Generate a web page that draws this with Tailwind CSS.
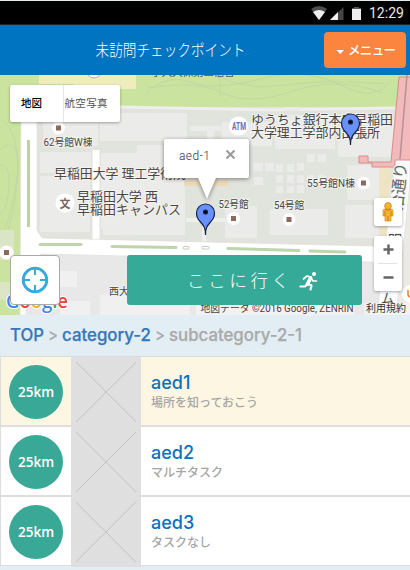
<!DOCTYPE html>
<html lang="ja">
<head>
<meta charset="utf-8">
<title>未訪問チェックポイント</title>
<script src="https://cdn.jsdelivr.net/npm/@tailwindcss/browser@4"></script>
</head>
<body class="w-[410px] h-[570px] overflow-hidden bg-[#e3eef4] font-['Liberation_Sans','Noto_Sans_CJK_JP',sans-serif]">
<div class="h-px bg-[#e3ece8]"></div>
<div class="h-6 bg-black border-b border-[#222] flex items-center justify-end pr-[6px]">
  <svg class="w-[58px] h-6" viewBox="311 1 58 24">
    <path d="M311 9q8-6 16 0l-8 11z" fill="#4d4d4d"/><path d="M313 12q6-4 12 0l-6 8z" fill="#eee"/>
    <path d="M343.500 7v13h-13.500z" fill="#444"/><path d="M338 12v8h-8z" fill="#f2f2f2"/>
    <path d="M352 8h2v-1h5v1h2v12h-9z" fill="#eee"/><path d="M352 8h2v-1h5v1h2v1h-9z" fill="#555"/>
  </svg>
  <span class="font-['Roboto'] text-[14px] leading-6 text-[#e8e8e8] w-[35px] whitespace-nowrap">12:29</span>
</div>
<header class="h-[50px] bg-[#0174c1] grid grid-cols-[95px_155px_1fr] items-center">
  <span></span>
  <svg class="w-[155px] h-[30px]" viewBox="95 35 155 30"><text x="95.500" y="55.500" textLength="150" lengthAdjust="spacingAndGlyphs" font-size="16" font-weight="300" fill="#fff" font-family="Noto Sans CJK JP, sans-serif">未訪問チェックポイント</text></svg>
  <button class="justify-self-end mr-1 w-[82px] h-9 rounded-[4px] bg-[#fb843e] text-white">
    <svg class="w-[82px] h-9" viewBox="324 32 82 36"><path d="M336.500 50h7.500l-3.750 4z" fill="#fff"/><text x="348" y="55" textLength="48" font-size="12.500" font-weight="500" fill="#fff" font-family="Noto Sans CJK JP, sans-serif">メニュー</text></svg>
  </button>
</header>
<main>
<section class="h-60 relative overflow-hidden">
  <svg class="block w-[410px] h-60" viewBox="0 75 410 240" font-family="Roboto, Noto Sans CJK JP, sans-serif">
    <rect y="75" width="410" height="240" fill="#e1e3dd"/>
    <path d="M0 75h410v32H136l-100-2-15 5v205H0z" fill="#cae49f"/>
    <g fill="none" stroke="#c0d2a6" stroke-width=".8">
      <path d="M145 95q20-22 45-13t70-3 80 6 50-4M215 75q30 16 70 10t100-1M148 88q50-8 75 5t70-2 90 2M220 75v22"/>
      <path d="M0 150q14-12 17 5t-5 50-12 30M0 165q10-2 9 20t-9 30M3 120q16 16 15 50T5 240"/>
    </g>
    <path d="M39 75h97v14h-17v-2h-45v-3H39z" fill="#f0edbd"/>
    <circle cx="94" cy="71" r="7" fill="#fff" stroke="#aaa"/>
    <text x="151" y="75.500" font-size="11" fill="#555" textLength="84">学大久保第三宿舎</text>
    <path d="M120 107l150 3 125-2" fill="none" stroke="#eeeeec" stroke-width="3"/>
    <g fill="#ebebea">
      <path d="M43 116h55v30H43zM100 113h87v28h-87zM137 145h50v35h-50zM40 152h51v21H40zM40 176h50v56H40zM101 153h60v76h-60zM103 180h82v55h-82z"/>
      <path d="M190 126h37v5h-13v25h-7v-25h-17zM222 122h50v24h-50zM275 115h60v34h-60zM338 119h56v38h-56zM347 165h43v35h-43zM285 107h16v4h-16z"/>
      <path d="M225 206h32v32h-32zM270 209h26v26h-26zM296 209h32v26h-32zM345 205h34v33h-34z"/>
      <path d="M254 163h9v8h-9zM265 163h9v8h-9zM254 177h9v8h-9zM276 164h7v8h-7zM287 164h7v8h-7zM297 163h7v8h-7zM307 154h8v8h-8zM318 154h8v8h-8zM276 175h7v8h-7zM287 175h7v8h-7zM297 175h7v8h-7zM307 175h8v8h-8zM318 175h8v8h-8zM276 186h7v7h-7zM287 186h7v7h-7zM297 185h7v8h-7z"/>
    </g>
    <path d="M184 180h44v6h-44z" fill="#ecd9ba"/>
    <path d="M186 220h39M204 225v18" stroke="#efefed" stroke-width="4"/>
    <path d="M40 252h370v63H20v-55z" fill="#e8e8e8"/>
    <path d="M55 271h22v16H55zM100 295h90v20h-90zM60 301h30v14H60z" fill="#f0f0f0"/>
    <path d="M96 150v90" stroke="#fff" stroke-width="7"/>
    <path d="M21 108h16v122l5 8 330 8 8 0v20l-8-4-330-8-12 5-4 10v46H20z" fill="#fff" stroke="#e5dddd" stroke-width=".7"/>
    <path d="M379 166h12l-5 79h-6z" fill="#eee4c3"/>
    <path d="M28.500 140v87" stroke="#bdd0a8" stroke-width="3"/>
    <path d="M40 244.500h41M112 246.500l64 1M228 248.500l71 2M310 251l35 1" stroke="#bfd4ac" stroke-width="3" stroke-linecap="round"/>
    <rect x="183" y="246.500" width="6" height="2.500" rx="1" fill="#fff" stroke="#cfc4bd"/><rect x="202" y="246.500" width="7" height="2.500" rx="1" fill="#fff" stroke="#cfc4bd"/>
    <path d="M395 159h15v25l-14 131h-19z" fill="#fdfdfd" stroke="#ddd5d0" stroke-width=".6"/>
    <path d="M410 184v131h-14z" fill="#eceae4"/>
    <path d="M399 77h12v83h-16v7h-23v-4h-13v-7h9v6h23z" fill="#f2babb" stroke="#dc8b8d"/>
    <path d="M407 75l-7 84" stroke="#b79295" stroke-width="1.500"/>
    <path d="M0 230h14v30H0zM0 282h12v18H0z" fill="#d9e5c5"/>

    <g fill="#fff">
      <circle cx="58.500" cy="128" r="6.500"/><circle cx="65" cy="203" r="9.500"/><circle cx="6.500" cy="252.500" r="7"/><circle cx="233.500" cy="218.500" r="6.500"/><circle cx="289" cy="219.500" r="6.500"/><circle cx="363.500" cy="183" r="6.500"/><circle cx="238.500" cy="126" r="9.500"/><circle cx="411" cy="294" r="9"/>
    </g>
    <path d="M56 125.500h5v5h-5zM4 250h5v5h-5zM231 216h5v5h-5zM286.500 217h5v5h-5zM361 180.500h5v5h-5z" fill="#8b6a5d"/>
    <path d="M408 290v4q0 3 4 3" stroke="#ee8d37" stroke-width="1.700" fill="none"/>
    <text x="59.500" y="207.500" font-size="11" font-weight="700" fill="#79645d">文</text>
    <text x="232" y="130" font-size="10.500" font-weight="700" textLength="14" lengthAdjust="spacingAndGlyphs" fill="#696bc0">ATM</text>
    <g fill="#4a4745" stroke="#f3f3f0" stroke-width="2" paint-order="stroke" stroke-linejoin="round">
      <text x="43.500" y="145.500" font-size="10" textLength="49" lengthAdjust="spacingAndGlyphs">62号館W棟</text>
      <text x="54" y="177.500" font-size="13" textLength="132" lengthAdjust="spacingAndGlyphs">早稲田大学 理工学術院</text>
      <text x="77" y="200.500" font-size="13" textLength="81" lengthAdjust="spacingAndGlyphs">早稲田大学 西</text>
      <text x="77" y="213.500" font-size="13" textLength="104" lengthAdjust="spacingAndGlyphs">早稲田キャンパス</text>
      <text x="251" y="124" font-size="13" textLength="142" lengthAdjust="spacingAndGlyphs">ゆうちょ銀行本店早稲田</text>
      <text x="251" y="137" font-size="13" textLength="129" lengthAdjust="spacingAndGlyphs">大学理工学部内出張所</text>
      <text x="307" y="187" font-size="10" textLength="48" lengthAdjust="spacingAndGlyphs">55号館N棟</text>
      <text x="218.500" y="208" font-size="10" textLength="30" lengthAdjust="spacingAndGlyphs">52号館</text>
      <text x="274" y="209" font-size="10" textLength="30" lengthAdjust="spacingAndGlyphs">54号館</text>
      <text x="109" y="294.500" font-size="10">西大久保</text>
      <text transform="translate(402 211) rotate(-84)" font-size="16" fill="#666">治通り</text>
      <text x="388" y="245" font-size="14">明</text>
      <text x="381" y="303" font-size="13">ム</text>
    </g>
    <text x="23" y="320" font-size="8" font-weight="700" fill="#333" textLength="107">EI ECONINTERNATIONAL</text>
    <text x="6" y="308" font-family="Open Sans, sans-serif" font-size="20" font-weight="600" textLength="62" lengthAdjust="spacingAndGlyphs" stroke="#fff" stroke-width="2" paint-order="stroke"><tspan fill="#4484ef">G</tspan><tspan fill="#e84438">o</tspan><tspan fill="#f6b51c">o</tspan><tspan fill="#4484ef">g</tspan><tspan fill="#3aa65b">l</tspan><tspan fill="#e84438">e</tspan></text>
    <rect x="196" y="303" width="158" height="12" fill="#f4f4f4" opacity=".8"/><rect x="364" y="303" width="46" height="12" fill="#f4f4f4" opacity=".75"/>
    <text x="200.500" y="311.500" font-size="10" fill="#444" textLength="153" lengthAdjust="spacingAndGlyphs">地図データ ©2016 Google, ZENRIN</text>
    <text x="366" y="312" font-size="10" fill="#333" textLength="40" lengthAdjust="spacingAndGlyphs">利用規約</text>

    <g fill="#6991fd" stroke="#172447" stroke-width="1.200">
      <path d="M205.500 235c0-7-1.500-9-5-13-3-3-4-6-4-9a9 9 0 0 1 18 0c0 3-1 6-4 9-3.500 4-5 6-5 13z"/><circle cx="205.500" cy="212" r="2" fill="#000"/>
      <path d="M350.500 145c0-7-1.500-9-5-13-3-3-4-6-4-9a9 9 0 0 1 18 0c0 3-1 6-4 9-3.500 4-5 6-5 13z"/><circle cx="350.500" cy="122" r="2" fill="#000"/>
    </g>
    <g style="filter:drop-shadow(0 1px 2px #0007)">
      <path d="M166 139h81q2 0 2 2v35q0 2-2 2h-31l-9 21-9-21h-32q-2 0-2-2v-35q0-2 2-2z" fill="#fff"/>
    </g>
    <text x="179" y="160" font-size="12" font-weight="300" fill="#333" textLength="31">aed-1</text>
    <path d="M226.500 150.500l8 8m0-8l-8 8" stroke="#999" stroke-width="2"/>
  </svg>
  <div class="absolute left-[10px] top-[10px] w-[110px] h-[37px] bg-white rounded-[2px] shadow-[0_1px_3px_#0005] flex">
    <svg class="w-[110px] h-[37px]" viewBox="10 85 110 37" font-family="Noto Sans CJK JP, sans-serif"><path d="M63.500 85v37" stroke="#e6e6e6"/><text x="21" y="106.500" font-size="10.500" font-weight="500" fill="#000">地図</text><text x="64.500" y="106.500" font-size="10.500" fill="#555" textLength="43">航空写真</text></svg>
  </div>
  <div class="absolute left-[374px] top-[123px] w-7 h-7 bg-white rounded-[2px] shadow-[0_1px_3px_#0005] grid place-items-center">
    <svg class="w-3 h-5" viewBox="0 0 12 20"><path d="M3 7h6q2 0 2 2v5H9v5H3v-5H1V9q0-2 2-2z" fill="#f7b32b" stroke="#d28e20" stroke-width=".7"/><circle cx="6" cy="4" r="3.400" fill="#f7b32b" stroke="#c98222" stroke-width=".7"/><path d="M6 14v5M3 7q3 3 6 0M3 9v5M9 9v5" stroke="#bd7719" fill="none" stroke-width=".8"/></svg>
  </div>
  <div class="absolute left-[374px] top-[161px] w-7 h-[55px] bg-white rounded-[2px] shadow-[0_1px_3px_#0005]">
    <svg class="w-7 h-[55px]" viewBox="0 0 28 55"><path d="M9.500 13.500h10M14.500 8.500v10M9.500 41.500h10" stroke="#666" stroke-width="2.500"/><path d="M4 27.500h19" stroke="#e3e3e3"/></svg>
  </div>
  <button class="absolute left-[10px] top-[180px] w-[50px] h-[50px] bg-white border border-[#aaa] rounded-[4px] grid place-items-center">
    <svg class="w-7 h-7" viewBox="0 0 28 28" fill="none" stroke="#35a9dc"><circle cx="14" cy="14" r="11.800" stroke-width="2.800"/><path d="M14 3v6M14 19v6M3 14h6M19 14h6" stroke-width="2"/></svg>
  </button>
  <button class="absolute left-[127px] top-[180px] w-[235px] h-[50px] bg-[#35aa99] rounded-[3px]">
    <svg class="w-[235px] h-[50px]" viewBox="127 255 235 50"><text x="187" y="286.500" font-family="Noto Sans CJK JP, sans-serif" font-size="17.500" font-weight="300" fill="#fff" textLength="102">ここに行く</text>
    <g fill="none" stroke="#fff" stroke-linecap="round" stroke-linejoin="round"><path d="M310.500 278l-3 6" stroke-width="3.800"/><path d="M311 277l-4-1-3.500 3M311 278l2 3h3.500" stroke-width="1.700"/><path d="M307.500 284l-2.500 2.500h-4.500M308 284l3.500 1.500-1 4" stroke-width="2.200"/></g><circle cx="314" cy="274" r="2.100" fill="#fff"/></svg>
  </button>
</section>
<nav class="h-[42px] border-b border-[#d9dcdd] pl-[10px] flex items-center">
  <svg class="w-[300px] h-[41px]" viewBox="10 315 300 41" font-size="17.500" font-family="Inter, sans-serif" font-weight="500" fill="#aaa" stroke-width=".25"><text x="10" y="341" fill="#3778b8" stroke="#3778b8" textLength="34" lengthAdjust="spacingAndGlyphs">TOP</text><text x="48" y="341" textLength="10" lengthAdjust="spacingAndGlyphs">&gt;</text><text x="62" y="341" fill="#3778b8" stroke="#3778b8" textLength="89" lengthAdjust="spacingAndGlyphs">category-2</text><text x="155" y="341" textLength="10" lengthAdjust="spacingAndGlyphs">&gt;</text><text x="169" y="341" stroke="#aaa" textLength="133" lengthAdjust="spacingAndGlyphs">subcategory-2-1</text></svg>
</nav>
<ul class="border-l border-[#ddd]">
  <li class="h-[70px] border-b-2 border-[#ddd] bg-[#fdf6e2] flex">
    <div class="w-[70px] flex justify-center pt-2"><div class="w-[54px] h-[54px] rounded-full bg-[#39a896] text-white font-['Open_Sans'] font-semibold text-[13.5px] flex items-center justify-center">25km</div></div>
    <svg class="w-[70px] h-[70px] bg-[#dfdfdf]" viewBox="0 0 70 70"><path d="M5 5l60 60M65 5L5 65" stroke="#c3c3c3"/></svg>
    <div class="pl-[10px] pt-4"><h2 class="font-['Inter'] font-medium text-[18px] leading-5 text-[#0b70bd]">aed1</h2><p class="text-[12px] leading-[18px] text-[#a5a5a5] font-['Noto_Sans_CJK_JP'] font-medium">場所を知っておこう</p></div>
  </li>
  <li class="h-[70px] border-b-2 border-[#ddd] bg-white flex">
    <div class="w-[70px] flex justify-center pt-2"><div class="w-[54px] h-[54px] rounded-full bg-[#39a896] text-white font-['Open_Sans'] font-semibold text-[13.5px] flex items-center justify-center">25km</div></div>
    <svg class="w-[70px] h-[70px] bg-[#dfdfdf]" viewBox="0 0 70 70"><path d="M5 5l60 60M65 5L5 65" stroke="#c3c3c3"/></svg>
    <div class="pl-[10px] pt-4"><h2 class="font-['Inter'] font-medium text-[18px] leading-5 text-[#0b70bd]">aed2</h2><p class="text-[12px] leading-[18px] text-[#a5a5a5] font-['Noto_Sans_CJK_JP'] font-medium">マルチタスク</p></div>
  </li>
  <li class="h-[69px] border-b border-[#ddd] bg-white flex">
    <div class="w-[70px] flex justify-center pt-2"><div class="w-[54px] h-[54px] rounded-full bg-[#39a896] text-white font-['Open_Sans'] font-semibold text-[13.5px] flex items-center justify-center">25km</div></div>
    <svg class="w-[70px] h-[70px] bg-[#dfdfdf]" viewBox="0 0 70 70"><path d="M5 5l60 60M65 5L5 65" stroke="#c3c3c3"/></svg>
    <div class="pl-[10px] pt-4"><h2 class="font-['Inter'] font-medium text-[18px] leading-5 text-[#0b70bd]">aed3</h2><p class="text-[12px] leading-[18px] text-[#a5a5a5] font-['Noto_Sans_CJK_JP'] font-medium">タスクなし</p></div>
  </li>
</ul>
</main>
</body>
</html>
